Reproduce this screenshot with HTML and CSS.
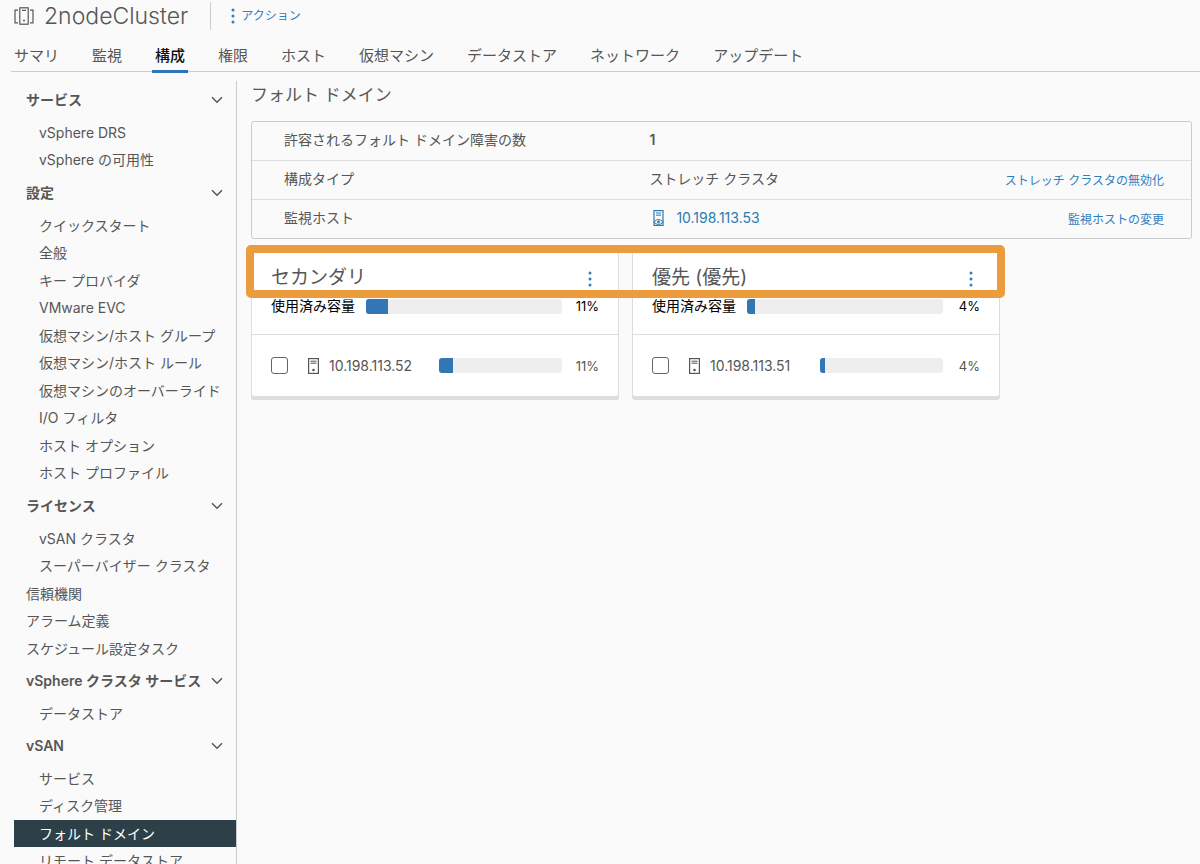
FILE: index.html
```
<!DOCTYPE html>
<html lang="ja">
<head>
    <meta charset="UTF-8">
    <meta name="viewport" content="width=device-width, initial-scale=1.0">
    <title>2nodeCluster - フォルト ドメイン</title>
    <link rel="stylesheet" href="styles.css">
</head>
<body>

<!-- shared icons -->
<svg class="sprite" aria-hidden="true">
    <symbol id="chevron" viewBox="0 0 12 8">
        <path d="M1 1.2l5 5 5-5" fill="none" stroke="currentColor" stroke-width="1.5"/>
    </symbol>
    <symbol id="dots" viewBox="0 0 4 16">
        <circle cx="2" cy="2" r="1.5"/><circle cx="2" cy="8" r="1.5"/><circle cx="2" cy="14" r="1.5"/>
    </symbol>
    <symbol id="host" viewBox="0 0 11 16">
        <rect x="0.6" y="0.6" width="9.8" height="14.8" fill="none" stroke="currentColor" stroke-width="1.2"/>
        <path d="M2.5 3.2h6M2.5 5.2h6" stroke="currentColor"/>
        <circle cx="5.5" cy="12" r="1.3"/>
    </symbol>
    <symbol id="witness" viewBox="0 0 11 16">
        <rect x="1" y="0.6" width="9" height="14.8" fill="none" stroke="currentColor" stroke-width="1.2"/>
        <path d="M3 3h5M3 5.2h5" stroke="currentColor"/>
        <path d="M0.8 12q4.7-5 9.4 0q-4.7 5-9.4 0z" fill="#fafafa" stroke="currentColor"/>
        <circle cx="5.5" cy="12" r="1.4"/>
    </symbol>
</svg>

<header class="header">
    <svg class="cluster-icon" viewBox="0 0 20 18" fill="none" stroke="currentColor" stroke-width="1.2">
        <rect x="5.8" y="0.8" width="8.4" height="16.4"/>
        <path d="M4 3.2H1v12.6h3M16 3.2h3v12.6h-3M8 3.4h4"/>
        <circle cx="10" cy="13.5" r="1" fill="currentColor" stroke="none"/>
    </svg>
    <h1>2nodeCluster</h1>
    <button class="actions"><svg class="dots"><use href="#dots"/></svg>アクション</button>
</header>

<nav class="tabs">
    <a href="#">サマリ</a>
    <a href="#">監視</a>
    <a href="#" class="active">構成</a>
    <a href="#">権限</a>
    <a href="#">ホスト</a>
    <a href="#">仮想マシン</a>
    <a href="#">データストア</a>
    <a href="#">ネットワーク</a>
    <a href="#">アップデート</a>
</nav>

<div class="layout">
    <nav class="sidebar">
        <button class="group">サービス<svg class="chevron"><use href="#chevron"/></svg></button>
        <ul>
            <li><a href="#">vSphere DRS</a></li>
            <li><a href="#">vSphere の可用性</a></li>
        </ul>
        <button class="group">設定<svg class="chevron"><use href="#chevron"/></svg></button>
        <ul>
            <li><a href="#">クイックスタート</a></li>
            <li><a href="#">全般</a></li>
            <li><a href="#">キー プロバイダ</a></li>
            <li><a href="#">VMware EVC</a></li>
            <li><a href="#">仮想マシン/ホスト グループ</a></li>
            <li><a href="#">仮想マシン/ホスト ルール</a></li>
            <li><a href="#">仮想マシンのオーバーライド</a></li>
            <li><a href="#">I/O フィルタ</a></li>
            <li><a href="#">ホスト オプション</a></li>
            <li><a href="#">ホスト プロファイル</a></li>
        </ul>
        <button class="group">ライセンス<svg class="chevron"><use href="#chevron"/></svg></button>
        <ul>
            <li><a href="#">vSAN クラスタ</a></li>
            <li><a href="#">スーパーバイザー クラスタ</a></li>
        </ul>
        <ul class="top-level">
            <li><a href="#">信頼機関</a></li>
            <li><a href="#">アラーム定義</a></li>
            <li><a href="#">スケジュール設定タスク</a></li>
        </ul>
        <button class="group">vSphere クラスタ サービス<svg class="chevron"><use href="#chevron"/></svg></button>
        <ul>
            <li><a href="#">データストア</a></li>
        </ul>
        <button class="group">vSAN<svg class="chevron"><use href="#chevron"/></svg></button>
        <ul>
            <li><a href="#">サービス</a></li>
            <li><a href="#">ディスク管理</a></li>
            <li><a href="#" class="selected">フォルト ドメイン</a></li>
            <li><a href="#">リモート データストア</a></li>
        </ul>
    </nav>

    <main class="content">
        <h2>フォルト ドメイン</h2>

        <table class="summary">
            <tr>
                <th scope="row">許容されるフォルト ドメイン障害の数</th>
                <td><strong>1</strong></td>
                <td class="action"></td>
            </tr>
            <tr>
                <th scope="row">構成タイプ</th>
                <td>ストレッチ クラスタ</td>
                <td class="action"><a href="#">ストレッチ クラスタの無効化</a></td>
            </tr>
            <tr>
                <th scope="row">監視ホスト</th>
                <td><a href="#" class="witness"><svg class="host-icon"><use href="#witness"/></svg>10.198.113.53</a></td>
                <td class="action"><a href="#">監視ホストの変更</a></td>
            </tr>
        </table>

        <div class="domains">
            <section class="card">
                <div class="card-head">
                    <h3>セカンダリ</h3>
                    <button class="menu" aria-label="メニュー"><svg class="dots"><use href="#dots"/></svg></button>
                </div>
                <div class="usage">
                    <span>使用済み容量</span>
                    <div class="bar"><div class="fill" style="width: 11%"></div></div>
                    <span class="percent">11%</span>
                </div>
                <div class="host">
                    <input type="checkbox" id="host52">
                    <label for="host52"><svg class="host-icon"><use href="#host"/></svg>10.198.113.52</label>
                    <div class="bar"><div class="fill" style="width: 11%"></div></div>
                    <span class="percent">11%</span>
                </div>
            </section>
            <section class="card">
                <div class="card-head">
                    <h3>優先 (優先)</h3>
                    <button class="menu" aria-label="メニュー"><svg class="dots"><use href="#dots"/></svg></button>
                </div>
                <div class="usage">
                    <span>使用済み容量</span>
                    <div class="bar"><div class="fill" style="width: 4%"></div></div>
                    <span class="percent">4%</span>
                </div>
                <div class="host">
                    <input type="checkbox" id="host51">
                    <label for="host51"><svg class="host-icon"><use href="#host"/></svg>10.198.113.51</label>
                    <div class="bar"><div class="fill" style="width: 4%"></div></div>
                    <span class="percent">4%</span>
                </div>
            </section>
            <div class="highlight"></div>
        </div>
    </main>
</div>

</body>
</html>
```
FILE: styles.css
```
* {
    box-sizing: border-box;
}

html {
    height: 100%;
    overflow: hidden;
}

body {
    height: 100%;
    margin: 0;
    display: flex;
    flex-direction: column;
    overflow: hidden;
    background: #fafafa;
    color: #565656;
    font-family: Inter, "Noto Sans CJK JP", sans-serif;
    font-size: 14px;
    line-height: 20px;
}

h1, h2, h3 {
    margin: 0;
    font-weight: 400;
}

a {
    color: #2a7ab0;
    text-decoration: none;
}

button {
    padding: 0;
    border: none;
    background: none;
    color: inherit;
    font: inherit;
    cursor: pointer;
}

ul {
    margin: 0;
    padding: 0;
    list-style: none;
}

.sprite {
    position: absolute;
    width: 0;
    height: 0;
}

.dots {
    width: 4px;
    height: 16px;
    fill: #2f7ebd;
}

.chevron {
    width: 12px;
    height: 8px;
}

.host-icon {
    flex: none;
    width: 11px;
    height: 16px;
    fill: currentColor;
}

/* header */
.header {
    flex: none;
    display: flex;
    align-items: center;
    height: 32px;
    padding-left: 14px;
}

.cluster-icon {
    width: 20px;
    height: 18px;
    margin-right: 10px;
}

.header h1 {
    font-size: 23px;
    font-weight: 300;
    line-height: 32px;
}

.actions {
    display: flex;
    align-items: center;
    gap: 6px;
    height: 28px;
    margin-left: 22px;
    padding-left: 20px;
    border-left: 1px solid #ccc;
    color: #2f7ebd;
    font-size: 12px;
}

/* tabs */
.tabs {
    flex: none;
    display: flex;
    gap: 27px;
    height: 40px;
    margin-left: 11px;
    border-bottom: 1px solid #ccc;
    font-size: 15px;
    line-height: 48px;
}

.tabs a {
    height: 41px;
    padding: 0 3px;
    color: #565656;
    white-space: nowrap;
}

.tabs .active {
    border-bottom: 3px solid #2f74b5;
    color: #111;
    font-weight: 500;
}

.layout {
    flex: 1;
    min-height: 0;
    display: flex;
    padding-top: 9px;
}

/* sidebar */
.sidebar {
    flex: none;
    width: 223px;
    margin-left: 14px;
    border-right: 1px solid #ccc;
    overflow: hidden;
    white-space: nowrap;
}

.group {
    display: flex;
    align-items: center;
    justify-content: space-between;
    width: 100%;
    height: 38px;
    padding: 0 13px 0 12px;
    font-size: 14px;
    font-weight: 600;
}

.sidebar li {
    height: 27px;
}

.sidebar li:nth-child(even) {
    height: 28px;
}

.sidebar a {
    display: flex;
    align-items: center;
    height: 100%;
    padding-left: 25px;
    color: #565656;
}

.sidebar .top-level a {
    padding-left: 12px;
}

.sidebar .selected {
    background: #2d4048;
    color: #fff;
}

/* content */
.content {
    flex: 1;
    min-width: 0;
    padding: 1px 8px 0 14px;
}

.content h2 {
    font-size: 17px;
    line-height: 26px;
    margin-bottom: 13px;
}

.summary {
    width: 100%;
    border: 1px solid #ccc;
    border-radius: 3px;
    border-spacing: 0;
}

.summary th,
.summary td {
    height: 39px;
    padding: 0 3px 2px;
    border-top: 1px solid #ddd;
    text-align: left;
    font-weight: 400;
}

.summary tr:first-child th,
.summary tr:first-child td {
    height: 38px;
    border-top: none;
}

.summary th {
    width: 42%;
    padding-left: 32px;
}

.summary strong {
    font-weight: 600;
}

.summary .action {
    padding: 2px 27px 0 0;
    text-align: right;
    font-size: 12px;
}

.action a {
    color: #2f7ebd;
}

.witness {
    display: flex;
    align-items: center;
    gap: 12px;
    padding-left: 4px;
}

.domains {
    position: relative;
    display: grid;
    grid-template-columns: 1fr 1fr;
    gap: 13px;
    max-width: 749px;
    margin-top: 12px;
}

.card {
    background: #fff;
    border: 1px solid #ddd;
    border-radius: 3px;
    box-shadow: 0 3px 0 #ddd;
}

.card-head,
.usage,
.host {
    display: flex;
    align-items: center;
    padding: 0 19px;
}

.card-head {
    justify-content: space-between;
    height: 46px;
    padding-top: 6px;
}

.card h3 {
    font-size: 19px;
    line-height: 28px;
}

.menu {
    display: flex;
    padding: 1px 7px 0;
}

.usage {
    height: 36px;
    padding-bottom: 20px;
    color: #000;
    gap: 11px;
}

.host {
    height: 62px;
    border-top: 1px solid #ddd;
}

.host input {
    appearance: none;
    width: 17px;
    height: 17px;
    margin: 0 20px 0 0;
    border: 1px solid #666;
    border-radius: 3px;
}

.host label {
    display: flex;
    align-items: center;
    gap: 10px;
    width: 131px;
}

.bar {
    flex: 1;
    height: 15px;
    border-radius: 3px;
    background: #eee;
    overflow: hidden;
}

.fill {
    height: 100%;
    background: #3375b5;
}

.percent {
    width: 37px;
    font-size: 13px;
    text-align: right;
}

.usage .percent {
    margin-left: -11px;
}

/* orange frame over the card titles */
.highlight {
    position: absolute;
    top: -6px;
    left: -5px;
    right: -5px;
    height: 53px;
    border: 8px solid #ec9c3c;
    border-radius: 5px;
    pointer-events: none;
}
```
